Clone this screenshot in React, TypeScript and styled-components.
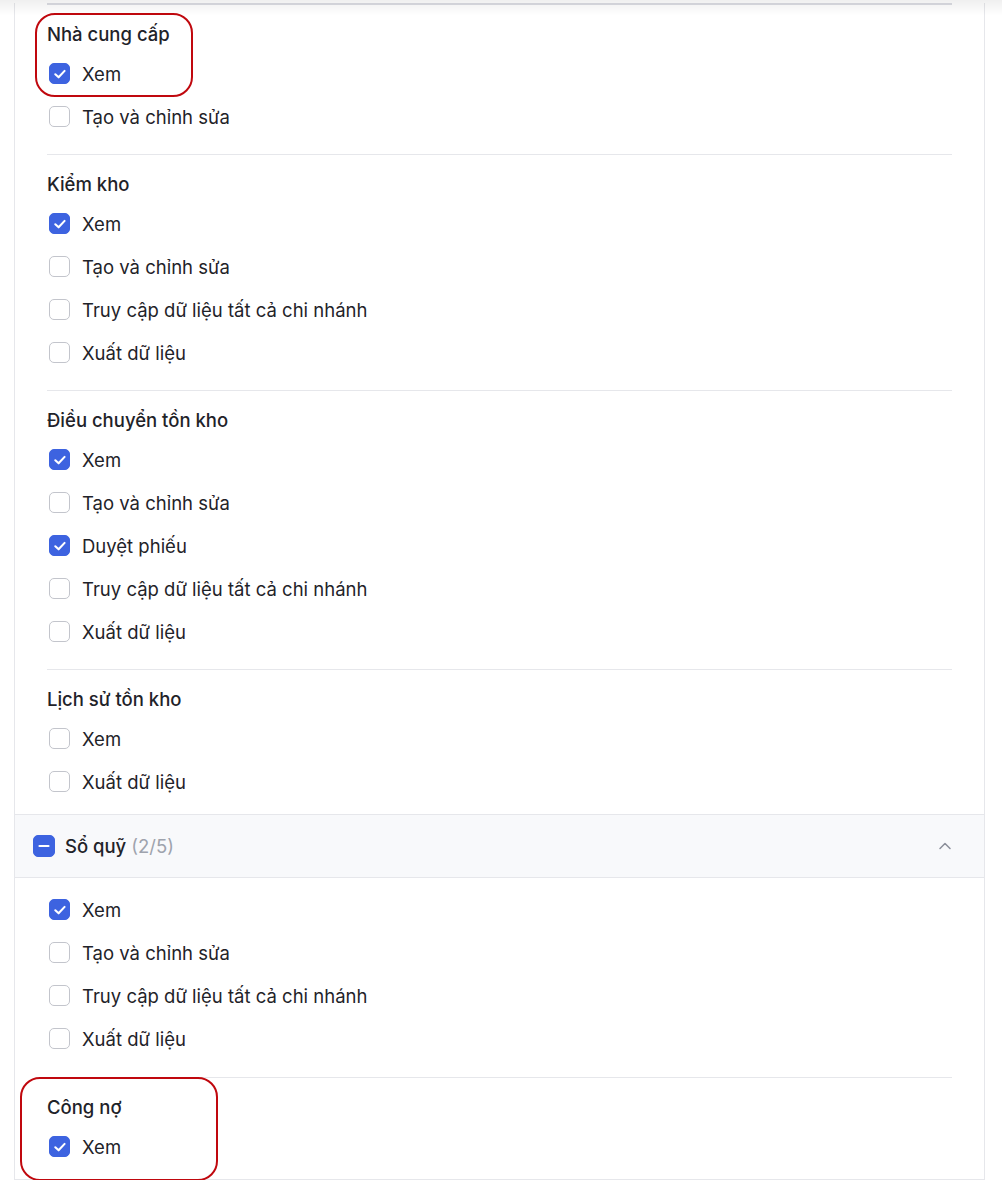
import React from "react";
import styled, { createGlobalStyle } from "styled-components";
import { ChevronUp } from "lucide-react";

const Global = createGlobalStyle`
  html, body { margin: 0; padding: 0; background: #ffffff; }
  body { font-family: Inter, "Noto Sans", "Liberation Sans", sans-serif; color: #1f2329; }
  * { box-sizing: border-box; }
`;

const TopShade = styled.div`
  position: fixed;
  top: 0;
  left: 0;
  right: 0;
  height: 16px;
  background: linear-gradient(to bottom, rgba(0,0,0,0.06), rgba(0,0,0,0));
  pointer-events: none;
  z-index: 5;
`;

const Panel = styled.div`
  margin: 0 17px 0 14px;
  border-left: 1px solid #e6e7eb;
  border-right: 1px solid #e6e7eb;
  border-bottom: 1px solid #e6e7eb;
  background: #fff;
`;

const GroupBody = styled.div`
  padding: 0 32px;
`;

const Divider = styled.div<{ $thick?: boolean; $top?: number }>`
  height: ${(p) => (p.$thick ? 2 : 1)}px;
  margin-top: ${(p) => p.$top ?? 0}px;
  background: ${(p) => (p.$thick ? "#dcdde3" : "#e6e7eb")};
`;

const Section = styled.div<{ $last?: boolean }>`
  position: relative;
  padding: 16px 0 ${(p) => (p.$last ? 11 : 16)}px;
`;

const Heading = styled.div`
  height: 26px;
  line-height: 26px;
  font-size: 18.5px;
  font-weight: 500;
  color: #1f2329;
  margin-bottom: 5px;
`;

const RowList = styled.div`
  padding: 10px 0 17px;
`;

const Row = styled.label`
  display: flex;
  align-items: center;
  gap: 12px;
  height: 43px;
  padding-left: 2px;
  font-size: 18.5px;
  color: #1f2329;
`;

const Box = styled.span<{ $on?: boolean; $size?: number }>`
  width: ${(p) => p.$size ?? 21}px;
  height: ${(p) => p.$size ?? 21}px;
  flex: none;
  border-radius: 5px;
  display: flex;
  align-items: center;
  justify-content: center;
  background: ${(p) => (p.$on ? "#3d63e0" : "#ffffff")};
  border: 1.5px solid ${(p) => (p.$on ? "#3d63e0" : "#c3c5cc")};
`;

const Annotation = styled.div<{ $l: number; $t: number; $w: number; $h: number }>`
  position: absolute;
  left: ${(p) => p.$l}px;
  top: ${(p) => p.$t}px;
  width: ${(p) => p.$w}px;
  height: ${(p) => p.$h}px;
  border: 2px solid #c0080e;
  border-radius: 20px;
  pointer-events: none;
  z-index: 3;
`;

const GroupHeader = styled.div`
  display: flex;
  align-items: center;
  gap: 10px;
  min-height: 64px;
  padding: 0 29px 0 18px;
  background: #f8f9fb;
  border-top: 1px solid #e6e7eb;
  border-bottom: 1px solid #e6e7eb;
`;

const GroupTitle = styled.div`
  flex: 1;
  font-size: 18.5px;
  font-weight: 500;
  color: #1f2329;
`;

const Count = styled.span`
  color: #9ea3ad;
  font-weight: 400;
  margin-left: 5px;
`;

const Chevron = styled(ChevronUp)`
  color: #8a8e99;
`;

const Check = () => (
  <svg width="16" height="16" viewBox="0 0 16 16" fill="none">
    <path d="M3.3 8.3 L6.6 11.3 L12.6 4.9" stroke="#fff" strokeWidth="2.1" strokeLinecap="round" strokeLinejoin="round" />
  </svg>
);

const Dash = () => (
  <svg width="14" height="14" viewBox="0 0 14 14" fill="none">
    <path d="M2.5 7 H11.5" stroke="#fff" strokeWidth="2.2" strokeLinecap="round" />
  </svg>
);

type Item = { label: string; on?: boolean };

const CheckRow = ({ label, on }: Item) => (
  <Row>
    <Box $on={on}>{on && <Check />}</Box>
    <span>{label}</span>
  </Row>
);

const VIEW = "Xem";
const EDIT = "Tạo và chỉnh sửa";
const ALL = "Truy cập dữ liệu tất cả chi nhánh";
const EXPORT = "Xuất dữ liệu";

export default function App() {
  return (
    <>
      <Global />
      <TopShade />
      <Panel>
        <GroupBody>
          <Divider $thick $top={3} />
          <Section>
            <Annotation $l={-12} $t={8} $w={158} $h={84} />
            <Heading>Nhà cung cấp</Heading>
            <CheckRow label={VIEW} on />
            <CheckRow label={EDIT} />
          </Section>
          <Divider />
          <Section>
            <Heading>Kiểm kho</Heading>
            <CheckRow label={VIEW} on />
            <CheckRow label={EDIT} />
            <CheckRow label={ALL} />
            <CheckRow label={EXPORT} />
          </Section>
          <Divider />
          <Section>
            <Heading>Điều chuyển tồn kho</Heading>
            <CheckRow label={VIEW} on />
            <CheckRow label={EDIT} />
            <CheckRow label="Duyệt phiếu" on />
            <CheckRow label={ALL} />
            <CheckRow label={EXPORT} />
          </Section>
          <Divider />
          <Section $last>
            <Heading>Lịch sử tồn kho</Heading>
            <CheckRow label={VIEW} />
            <CheckRow label={EXPORT} />
          </Section>
        </GroupBody>
        <GroupHeader>
          <Box $on $size={22}>
            <Dash />
          </Box>
          <GroupTitle>
            Sổ quỹ<Count>(2/5)</Count>
          </GroupTitle>
          <Chevron size={20} strokeWidth={1.8} />
        </GroupHeader>
        <GroupBody>
          <RowList>
            <CheckRow label={VIEW} on />
            <CheckRow label={EDIT} />
            <CheckRow label={ALL} />
            <CheckRow label={EXPORT} />
          </RowList>
          <Divider />
          <Section $last>
            <Annotation $l={-27} $t={-1} $w={198} $h={104} />
            <Heading>Công nợ</Heading>
            <CheckRow label={VIEW} on />
          </Section>
        </GroupBody>
      </Panel>
    </>
  );
}
